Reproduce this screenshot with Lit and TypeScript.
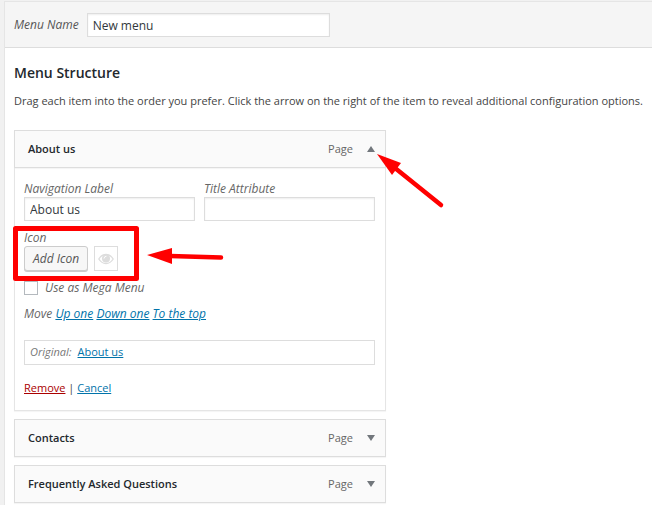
import { LitElement, html, css, nothing } from "lit";
import { customElement, property, state } from "lit/decorators.js";

const shared = css`
  :host {
    display: block;
    box-sizing: border-box;
    font-family: "Open Sans", "Noto Sans", sans-serif;
    font-size: 11px;
    line-height: 18px;
    color: #444;
  }
  *,
  *::before,
  *::after {
    box-sizing: border-box;
  }
  input,
  button {
    font: inherit;
    margin: 0;
    border-radius: 0;
  }
  .text {
    display: block;
    width: 100%;
    height: 24px;
    padding: 0 5px;
    border: 1px solid #ddd;
    background: #fff;
    color: #32373c;
    font-size: 12px;
    box-shadow: inset 0 1px 2px rgba(0, 0, 0, 0.07);
    outline: none;
  }
  a {
    color: #0073aa;
  }
`;

/** One entry of the menu; its settings open and close with the arrow. */
@customElement("menu-entry")
export class MenuEntry extends LitElement {
  @property() name = "";
  @property() kind = "Page";
  @property({ type: Boolean }) open = false;

  static styles = [
    shared,
    css`
      .handle {
        display: flex;
        align-items: center;
        height: 38px;
        padding: 0 10px 0 13px;
        border: 1px solid #ddd;
        background: #fafafa;
        box-shadow: 0 1px 1px rgba(0, 0, 0, 0.04);
      }
      .title {
        flex: 1;
        font-weight: 600;
        color: #23282d;
      }
      .kind {
        color: #666;
      }
      .toggle {
        display: flex;
        align-items: center;
        justify-content: flex-end;
        width: 22px;
        height: 20px;
        padding: 0;
        border: 0;
        background: none;
        color: #72777c;
      }
      .toggle svg {
        display: block;
        width: 8px;
        height: 6px;
      }
      .settings {
        display: flex;
        flex-direction: column;
        padding: 13px 10px 13px 9px;
        border: 1px solid #e5e5e5;
        border-top: 0;
        box-shadow: 0 1px 1px rgba(0, 0, 0, 0.04);
      }
      .fields {
        display: grid;
        grid-template-columns: 1fr 1fr;
        gap: 9px;
      }
      .label {
        display: block;
        font-size: 12px;
        line-height: 16px;
        font-style: italic;
        color: #666;
      }
      .icon-field {
        margin-top: 9px;
      }
      .icon-row {
        display: flex;
        gap: 6px;
      }
      .add {
        height: 25px;
        padding: 0 8px;
        border: 1px solid #ccc;
        border-radius: 3px;
        background: #f7f7f7;
        box-shadow: 0 1px 0 #ccc;
        font-size: 12px;
        font-style: italic;
        color: #555;
      }
      .preview {
        display: flex;
        align-items: center;
        justify-content: center;
        width: 24px;
        height: 25px;
        padding: 0;
        border: 1px solid #ddd;
        background: #fff;
        color: #ddd;
      }
      .preview svg {
        width: 16px;
        height: 12px;
      }
      .mega {
        display: flex;
        align-items: center;
        gap: 7px;
        margin-top: 9px;
      }
      .check {
        appearance: none;
        width: 14px;
        height: 14px;
        border: 1px solid #b4b9be;
        background: #fff;
      }
      .check:checked {
        background: #1e8cbe;
      }
      .move {
        margin-top: 9px;
        font-size: 12px;
        font-style: italic;
        color: #666;
      }
      .original {
        height: 25px;
        margin-top: 17px;
        padding: 2px 5px;
        border: 1px solid #ddd;
      }
      .original em {
        color: #777;
        margin-right: 3px;
      }
      .actions {
        margin-top: 14px;
      }
      .remove {
        color: #a00;
      }
    `,
  ];

  private renderSettings() {
    return html`
      <div class="settings">
        <div class="fields">
          <div>
            <label class="label" for="nav">Navigation Label</label>
            <input class="text" id="nav" type="text" .value=${this.name} />
          </div>
          <div>
            <label class="label" for="attr">Title Attribute</label>
            <input class="text" id="attr" type="text" />
          </div>
        </div>
        <div class="icon-field">
          <span class="label">Icon</span>
          <div class="icon-row">
            <button class="add" type="button">Add Icon</button>
            <button class="preview" type="button" aria-label="Preview icon">
              <svg viewBox="0 0 16 12" aria-hidden="true">
                <path
                  fill="none"
                  stroke="currentColor"
                  stroke-width="1.300"
                  d="M.8 6C2.600 3 5 1.500 8 1.500S13.400 3 15.200 6c-1.800 3-4.200 4.500-7.200 4.500S2.600 9 .8 6z"
                />
                <circle cx="8" cy="5.500" r="4" fill="currentColor" />
                <path
                  fill="none"
                  stroke="#fff"
                  stroke-linecap="round"
                  d="M6 5.200A2 2 0 0 1 8 3.300"
                />
              </svg>
            </button>
          </div>
        </div>
        <div class="mega">
          <input class="check" id="mega" type="checkbox" />
          <label class="label" for="mega">Use as Mega Menu</label>
        </div>
        <div class="move">
          Move <a href="#up">Up one</a> <a href="#down">Down one</a>
          <a href="#top">To the top</a>
        </div>
        <div class="original">
          <em>Original:</em> <a href="#original">${this.name}</a>
        </div>
        <div class="actions">
          <a class="remove" href="#remove">Remove</a> |
          <a href="#cancel">Cancel</a>
        </div>
      </div>
    `;
  }

  render() {
    return html`
      <div class="handle">
        <span class="title">${this.name}</span>
        <span class="kind">${this.kind}</span>
        <button
          class="toggle"
          type="button"
          aria-label="Edit ${this.name}"
          aria-expanded=${this.open ? "true" : "false"}
          @click=${() => (this.open = !this.open)}
        >
          <svg viewBox="0 0 8 6" aria-hidden="true">
            <path
              fill="currentColor"
              d=${this.open ? "M4 0l4 6H0z" : "M0 0h8L4 6z"}
            />
          </svg>
        </button>
      </div>
      ${this.open ? this.renderSettings() : nothing}
    `;
  }
}

@customElement("app-root")
export class AppRoot extends LitElement {
  @state() private entries = [
    { name: "About us", open: true },
    { name: "Contacts", open: false },
    { name: "Frequently Asked Questions", open: false },
  ];

  static styles = [
    shared,
    css`
      :host {
        min-height: 100vh;
        padding: 1px 0 0 4px;
        background: #f1f1f1;
        overflow: hidden;
        position: relative;
      }
      .panel {
        min-height: calc(100vh - 1px);
        border: 1px solid #e5e5e5;
        border-width: 1px 0 0 1px;
        background: #fff;
      }
      .head {
        display: flex;
        align-items: center;
        gap: 8px;
        height: 46px;
        padding: 1px 9px 0;
        border-bottom: 1px solid #ddd;
        background: #f5f5f5;
      }
      .head label {
        font-size: 12px;
        font-style: italic;
        color: #555;
      }
      .head .text {
        width: 243px;
      }
      .body {
        padding: 16px 0 0 9px;
      }
      h3 {
        margin: 0;
        font-size: 14px;
        line-height: 18px;
        font-weight: 600;
        color: #23282d;
      }
      p {
        margin: 10px 0 20px;
      }
      .list {
        display: flex;
        flex-direction: column;
        gap: 8px;
        max-width: 372px;
      }
      .marks {
        position: absolute;
        left: 0;
        top: 0;
        width: 460px;
        height: 300px;
        pointer-events: none;
      }
    `,
  ];

  render() {
    return html`
      <main class="panel">
        <div class="head">
          <label for="menu-name">Menu Name</label>
          <input class="text" id="menu-name" type="text" value="New menu" />
        </div>
        <div class="body">
          <h3>Menu Structure</h3>
          <p>
            Drag each item into the order you prefer. Click the arrow on the
            right of the item to reveal additional configuration options.
          </p>
          <div class="list">
            ${this.entries.map(
              (e) =>
                html`<menu-entry .name=${e.name} .open=${e.open}></menu-entry>`
            )}
          </div>
        </div>
      </main>
      <svg class="marks" viewBox="0 0 460 300" aria-hidden="true">
        <rect
          x="15.500"
          y="228.500"
          width="121"
          height="50"
          fill="none"
          stroke="#f00"
          stroke-width="5"
          stroke-linejoin="round"
        />
        <g fill="#f00" stroke="#f00" stroke-linecap="round">
          <path stroke="none" d="M377 154l24 9-9 12z" />
          <path stroke-width="4.500" d="M395 168l46 37" />
          <path stroke="none" d="M147 255l25-7v16z" />
          <path stroke-width="4.500" d="M170 256l51 1.500" />
        </g>
      </svg>
    `;
  }
}
